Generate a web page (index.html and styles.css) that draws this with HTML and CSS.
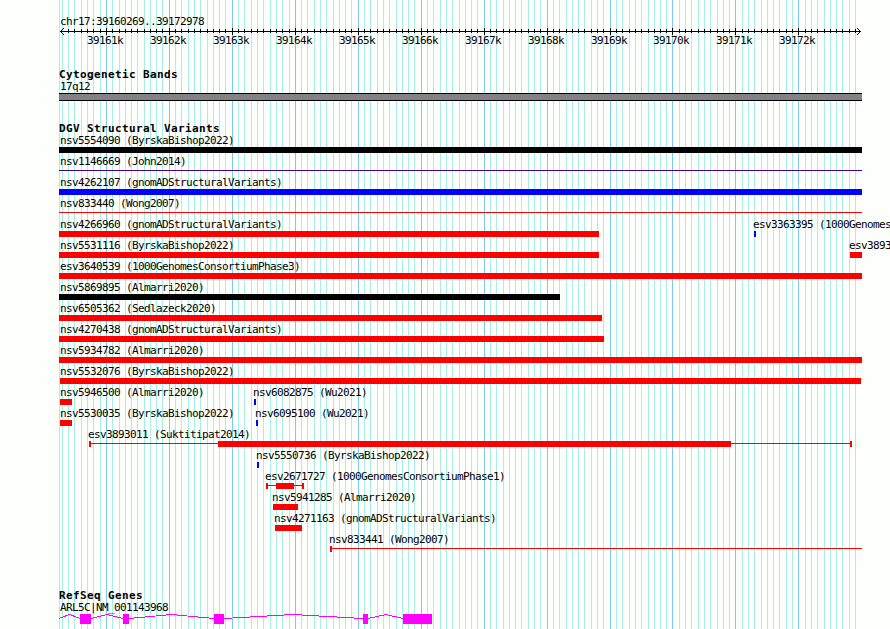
FILE: index.html
```html
<!DOCTYPE html>
<html lang="en">
<head>
<meta charset="utf-8">
<title>chr17:39160269..39172978</title>
<link rel="stylesheet" href="styles.css">
</head>
<body>
<main class="browser">
  <svg class="grid" width="890" height="629" shape-rendering="crispEdges" aria-hidden="true">
    <path class="grid-minor" id="grid-minor"/>
    <path class="grid-major" id="grid-major"/>
  </svg>

  <header class="ruler">
    <div class="label region">chr17:39160269..39172978</div>
    <svg class="axis" width="890" height="7" shape-rendering="crispEdges" aria-hidden="true">
      <path d="M60 3.5H861M60 3.5h1M61 2.5h1M61 4.5h1M62 1.5h1M62 5.5h1M63 .5h1M63 6.5h1M859 2.5h1M859 4.5h1M858 1.5h1M858 5.5h1M857 .5h1M857 6.5h1"/>
      <path id="ticks"/>
    </svg>
    <div class="lane tick-labels" id="tick-labels"></div>
  </header>

  <section class="track bands">
    <h2 class="title">Cytogenetic Bands</h2>
    <div class="label">17q12</div>
    <div class="band"></div>
  </section>

  <section class="track variants">
    <h2 class="title">DGV Structural Variants</h2>
    <div id="variants"></div>
  </section>

  <section class="track genes">
    <h2 class="title">RefSeq Genes</h2>
    <div class="label">ARL5C|NM_001143968</div>
    <svg class="gene" width="890" height="11" shape-rendering="crispEdges" aria-hidden="true">
      <path class="intron" d="M59 4.5L69.500 .5L80 4.500M91 4.500L107 .5L123 4.500M129 4.500L171.500 .5L214 4.500M224 4.500L293 .5L363 4.500M368 4.500L386 .5L403 4.500"/>
      <path class="exon" d="M80 0h11v10h-11zM123 0h6v10h-6zM214 0h10v10h-10zM363 0h5v10h-5zM403 0h29v10h-29z"/>
    </svg>
  </section>
</main>
<script src="tracks.js"></script>
</body>
</html>
```
FILE: tracks.js
```js
const major = [106, 169, 232, 295, 358, 421, 484, 547, 610, 672, 735, 798];
const minor = [59, 62, 68, 74, 81, 87, 93, 100,
  112, 119, 125, 131, 137, 144, 150, 156, 162,
  175, 181, 188, 194, 200, 207, 213, 219, 225,
  238, 244, 251, 257, 263, 270, 276, 282, 289,
  301, 307, 314, 320, 326, 333, 339, 345, 351,
  364, 370, 377, 383, 389, 396, 402, 408, 414,
  427, 433, 440, 446, 452, 459, 465, 471, 477,
  490, 496, 503, 509, 515, 521, 528, 534, 540,
  553, 559, 566, 572, 578, 584, 591, 597, 603,
  616, 622, 629, 635, 641, 648, 654, 660, 666,
  679, 685, 691, 698, 704, 710, 717, 723, 729,
  742, 748, 754, 761, 767, 773, 779, 786, 792,
  805, 811, 817, 824, 830, 836, 842, 849, 855];

const lines = (xs, y, h) => xs.map(x => `M${x + 0.5} ${y}v${h}`).join("");
document.getElementById("grid-minor").setAttribute("d", lines(minor, 0, 629));
document.getElementById("grid-major").setAttribute("d", lines(major, 0, 629));
document.getElementById("ticks").setAttribute("d",
  lines(minor.filter(x => x > 62), 1, 4) + lines(major, 0, 7));

document.getElementById("tick-labels").innerHTML = major.map((x, i) =>
  `<span class="label" style="grid-column:${x - 18}">${39161 + i}k</span>`).join("");

// Each part is [kind, start, end]; kinds: red, blue, black, or a thin line.
const rows = [
  [["nsv5554090 (ByrskaBishop2022)", 60, ["black", 59, 862]]],
  [["nsv1146669 (John2014)", 60, ["thin indigo", 59, 862]]],
  [["nsv4262107 (gnomADStructuralVariants)", 60, ["blue", 59, 862]]],
  [["nsv833440 (Wong2007)", 60, ["thin red", 59, 862]]],
  [["nsv4266960 (gnomADStructuralVariants)", 60, ["red", 59, 599]],
   ["esv3363395 (1000Genomes", 753, ["blue", 754, 756]]],
  [["nsv5531116 (ByrskaBishop2022)", 60, ["red", 59, 599]],
   ["esv3893", 849, ["red", 850, 862]]],
  [["esv3640539 (1000GenomesConsortiumPhase3)", 60, ["red", 59, 862]]],
  [["nsv5869895 (Almarri2020)", 60, ["black", 59, 560]]],
  [["nsv6505362 (Sedlazeck2020)", 60, ["red", 59, 602]]],
  [["nsv4270438 (gnomADStructuralVariants)", 60, ["red", 59, 604]]],
  [["nsv5934782 (Almarri2020)", 60, ["red", 59, 862]]],
  [["nsv5532076 (ByrskaBishop2022)", 60, ["red", 60, 861]]],
  [["nsv5946500 (Almarri2020)", 60, ["red", 60, 72]],
   ["nsv6082875 (Wu2021)", 253, ["blue", 254, 256]]],
  [["nsv5530035 (ByrskaBishop2022)", 60, ["red", 60, 72]],
   ["nsv6095100 (Wu2021)", 255, ["blue", 256, 258]]],
  [["esv3893011 (Suktitipat2014)", 88, ["red", 89, 91], ["thin red", 89, 852],
    ["red", 218, 731], ["red", 850, 852]]],
  [["nsv5550736 (ByrskaBishop2022)", 256, ["blue", 257, 259]]],
  [["esv2671727 (1000GenomesConsortiumPhase1)", 265, ["red", 266, 268],
    ["thin red", 266, 304], ["red", 276, 294], ["red", 302, 304]]],
  [["nsv5941285 (Almarri2020)", 272, ["red", 273, 298]]],
  [["nsv4271163 (gnomADStructuralVariants)", 274, ["red", 275, 302]]],
  [["nsv833441 (Wong2007)", 329, ["red", 330, 332], ["thin red", 330, 862]]]
];

document.getElementById("variants").innerHTML = rows.map(row =>
  `<div class="lane">${row.map(([name, x, ...parts]) =>
    `<span class="label" style="grid-column:${x + 1}">${name}</span>` +
    parts.map(([kind, a, b]) =>
      `<i class="bar ${kind}" style="grid-column:${a + 1}/${b + 1}"></i>`).join("")
  ).join("")}</div>`).join("");
```
FILE: styles.css
```css
body {
  margin: 0;
  background: #fdfffc;
  color: #000;
}

.browser {
  display: grid;
  width: 890px;
  height: 629px;
  overflow: hidden;
}

.grid,
.ruler,
.track {
  grid-column: 1;
  grid-row: 1;
}

.grid path {
  fill: none;
  stroke-width: 1;
}

.grid .grid-minor { stroke: #a9eee9; }
.grid .grid-major { stroke: #7fc8ee; }

.label {
  height: 12px;
  font: 11px/12px "DejaVu Sans Mono", monospace;
  letter-spacing: -0.622px;
  white-space: nowrap;
}

.ruler > .label,
.track > .label {
  padding-left: 60px;
}

.title {
  height: 12px;
  margin: 0;
  padding-left: 59px;
  font: bold 11px/12px "DejaVu Sans Mono", monospace;
  letter-spacing: 0.378px;
  white-space: nowrap;
}

.ruler { padding-top: 16px; }

.axis {
  display: block;
}

.axis path {
  stroke: #000;
  stroke-width: 1;
}

.lane {
  display: grid;
  grid-template-columns: repeat(890, 1px);
  grid-template-rows: 12px 6px;
  height: 21px;
}

.lane .label {
  grid-row: 1;
  width: 0;
}

.bands { padding-top: 69px; }

.band {
  width: 803px;
  height: 6px;
  margin-left: 59px;
  border: solid #000;
  border-width: 1px 0;
  background: #848284;
}

.variants { padding-top: 123px; }

.bar {
  grid-row: 2;
  height: 6px;
}

.bar.thin {
  height: 1px;
  margin-top: 2px;
}

.red { background: #f00; }
.blue { background: #00f; }
.black { background: #000; }
.indigo { background: #4b0082; }

.genes { padding-top: 590px; }

.gene {
  display: block;
}

.intron {
  fill: none;
  stroke: #f0f;
}

.exon { fill: #f0f; }
```
